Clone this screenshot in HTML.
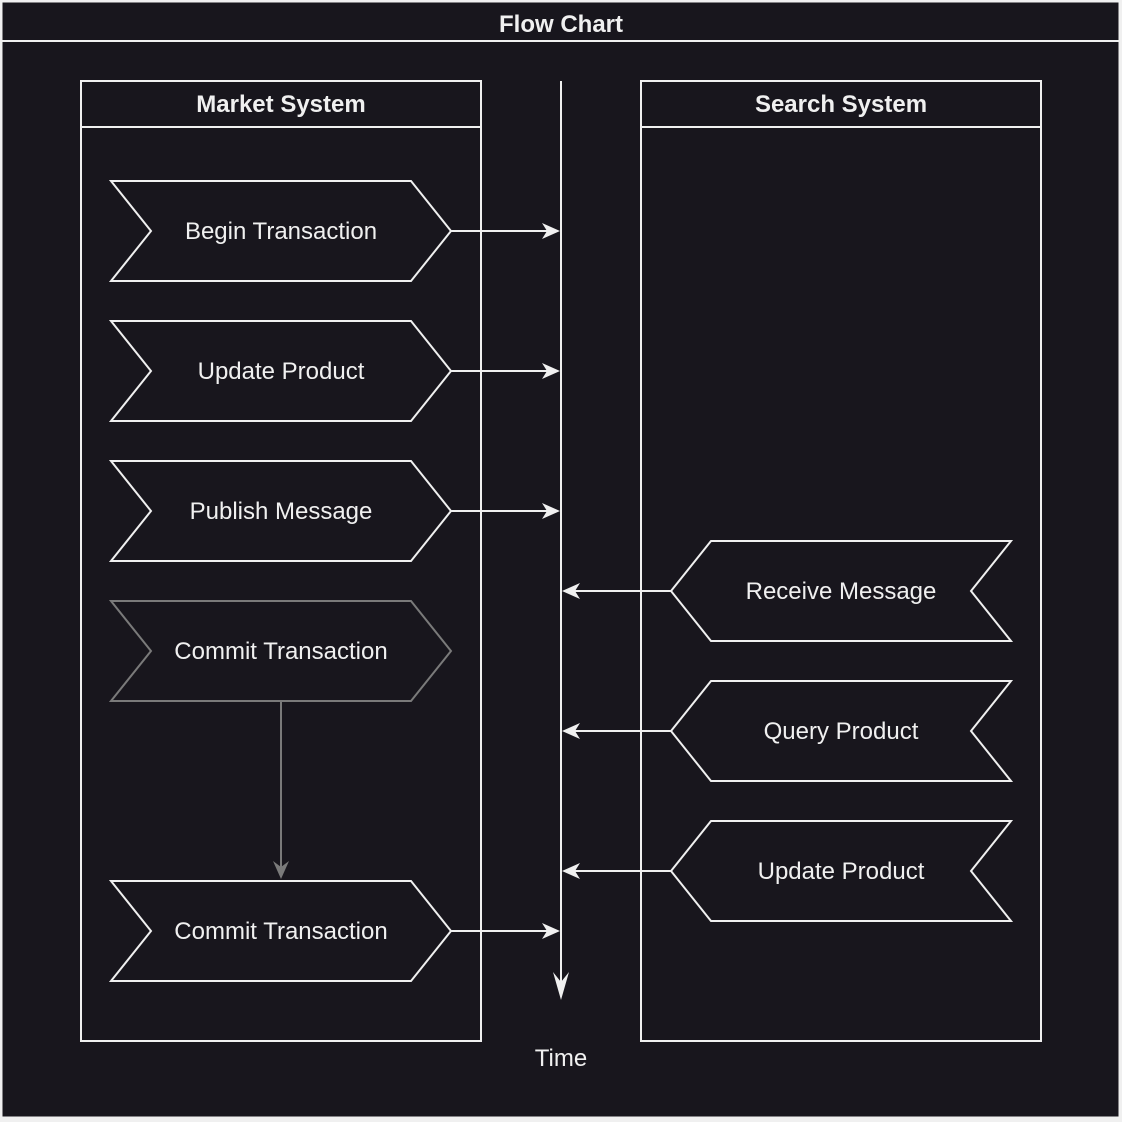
<!DOCTYPE html>
<html><head><style>html,body{margin:0;padding:0;background:#f0f0f0;width:1122px;height:1122px;overflow:hidden}</style></head>
<body>
<svg width="1122" height="1122" xmlns="http://www.w3.org/2000/svg" font-family="'Liberation Sans', Arial, sans-serif">
<rect x="1.5" y="1.5" width="1118" height="1116" fill="#18161d" stroke="#f0f0f0" stroke-width="2"/>
<line x1="1" y1="41" x2="1120" y2="41" stroke="#f0f0f0" stroke-width="2"/>
<text x="561" y="32" text-anchor="middle" font-size="24" font-weight="bold" fill="#f0f0f0">Flow Chart</text>
<g stroke="#f0f0f0" stroke-width="2" fill="none">
<rect x="81" y="81" width="400" height="960"/>
<line x1="81" y1="127" x2="481" y2="127"/>
<rect x="641" y="81" width="400" height="960"/>
<line x1="641" y1="127" x2="1041" y2="127"/>
<line x1="561" y1="81" x2="561" y2="990"/>
</g>
<text x="281" y="112" text-anchor="middle" font-size="24" font-weight="bold" fill="#f0f0f0">Market System</text>
<text x="841" y="112" text-anchor="middle" font-size="24" font-weight="bold" fill="#f0f0f0">Search System</text>
<path d="M561 982 L553 972 L561 1000 L569 972 Z" fill="#f0f0f0"/>
<text x="561" y="1066" text-anchor="middle" font-size="24" fill="#f0f0f0">Time</text>
<g fill="none" stroke="#f0f0f0" stroke-width="2">
<path d="M111 181 H411 L451 231 L411 281 H111 L151 231 Z"/>
<path d="M111 321 H411 L451 371 L411 421 H111 L151 371 Z"/>
<path d="M111 461 H411 L451 511 L411 561 H111 L151 511 Z"/>
<path d="M111 881 H411 L451 931 L411 981 H111 L151 931 Z"/>
<path d="M1011 541 H711 L671 591 L711 641 H1011 L971 591 Z"/>
<path d="M1011 681 H711 L671 731 L711 781 H1011 L971 731 Z"/>
<path d="M1011 821 H711 L671 871 L711 921 H1011 L971 871 Z"/>
<line x1="451" y1="231" x2="550" y2="231"/>
<line x1="451" y1="371" x2="550" y2="371"/>
<line x1="451" y1="511" x2="550" y2="511"/>
<line x1="451" y1="931" x2="550" y2="931"/>
<line x1="671" y1="591" x2="572" y2="591"/>
<line x1="671" y1="731" x2="572" y2="731"/>
<line x1="671" y1="871" x2="572" y2="871"/>
</g>
<g fill="#f0f0f0">
<path d="M560 231 L542 223 L547 231 L542 239 Z"/>
<path d="M560 371 L542 363 L547 371 L542 379 Z"/>
<path d="M560 511 L542 503 L547 511 L542 519 Z"/>
<path d="M560 931 L542 923 L547 931 L542 939 Z"/>
<path d="M562 591 L580 583 L575 591 L580 599 Z"/>
<path d="M562 731 L580 723 L575 731 L580 739 Z"/>
<path d="M562 871 L580 863 L575 871 L580 879 Z"/>
</g>
<g fill="none" stroke="#7a7a7a" stroke-width="2">
<path d="M111 601 H411 L451 651 L411 701 H111 L151 651 Z"/>
<line x1="281" y1="701" x2="281" y2="870"/>
</g>
<path d="M281 879 L273 861 L281 867 L289 861 Z" fill="#7a7a7a"/>
<g font-size="24" fill="#f0f0f0" text-anchor="middle">
<text x="281" y="239">Begin Transaction</text>
<text x="281" y="379">Update Product</text>
<text x="281" y="519">Publish Message</text>
<text x="281" y="659">Commit Transaction</text>
<text x="281" y="939">Commit Transaction</text>
<text x="841" y="599">Receive Message</text>
<text x="841" y="739">Query Product</text>
<text x="841" y="879">Update Product</text>
</g>
</svg>
</body></html>
